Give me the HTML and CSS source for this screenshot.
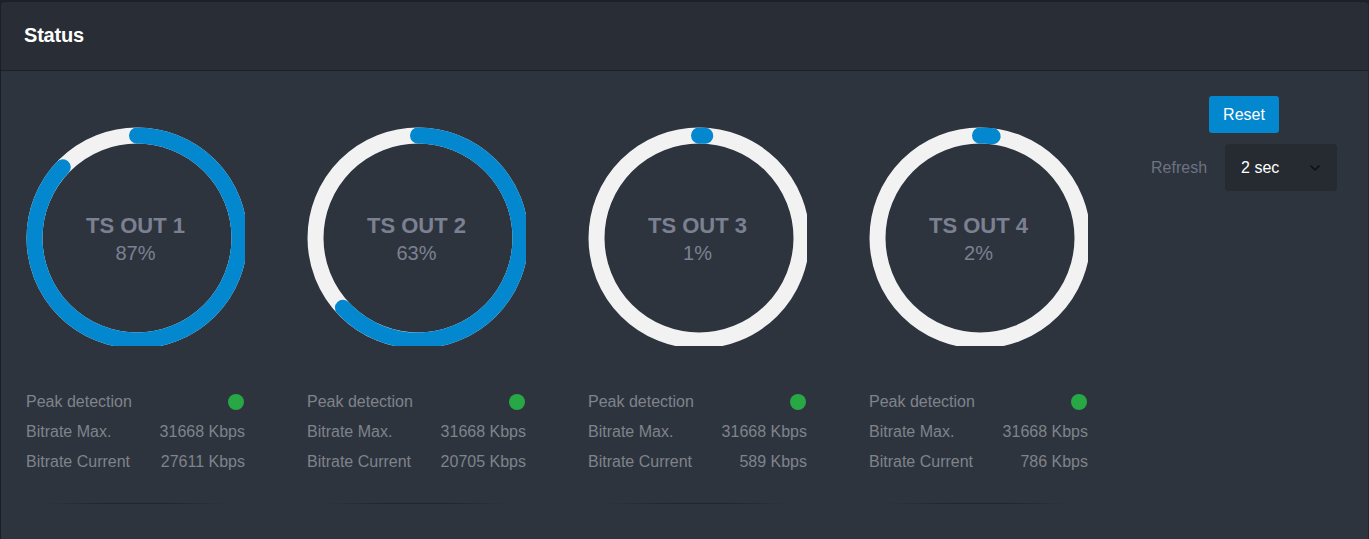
FILE: index.html
```html
<!DOCTYPE html>
<html>
<head>
<meta charset="utf-8">
<link rel="stylesheet" href="styles.css">
</head>
<body>
<div class="card">
  <div class="card-header"><h1 class="title">Status</h1></div>
  <div class="card-body">
    <div class="gauges">
      <div class="channel">
        <div class="gauge">
          <svg class="ring" width="219" height="219" viewBox="0 0 219 219">
            <circle class="track" cx="111" cy="111" r="102.5"/>
            <circle class="bar" cx="111" cy="111" r="102.5" style="stroke-dasharray: 560.3 1000"/>
          </svg>
          <div class="gauge-label"><div class="gauge-name">TS OUT 1</div><div class="gauge-pct">87%</div></div>
        </div>
        <div class="stats">
          <div class="row"><span>Peak detection</span><span class="dot"></span></div>
          <div class="row"><span>Bitrate Max.</span><span>31668 Kbps</span></div>
          <div class="row"><span>Bitrate Current</span><span>27611 Kbps</span></div>
        </div>
        <div class="shade"></div>
      </div>
      <div class="channel">
        <div class="gauge">
          <svg class="ring" width="219" height="219" viewBox="0 0 219 219">
            <circle class="track" cx="111" cy="111" r="102.5"/>
            <circle class="bar" cx="111" cy="111" r="102.5" style="stroke-dasharray: 405.7 1000"/>
          </svg>
          <div class="gauge-label"><div class="gauge-name">TS OUT 2</div><div class="gauge-pct">63%</div></div>
        </div>
        <div class="stats">
          <div class="row"><span>Peak detection</span><span class="dot"></span></div>
          <div class="row"><span>Bitrate Max.</span><span>31668 Kbps</span></div>
          <div class="row"><span>Bitrate Current</span><span>20705 Kbps</span></div>
        </div>
        <div class="shade"></div>
      </div>
      <div class="channel">
        <div class="gauge">
          <svg class="ring" width="219" height="219" viewBox="0 0 219 219">
            <circle class="track" cx="111" cy="111" r="102.5"/>
            <circle class="bar" cx="111" cy="111" r="102.5" style="stroke-dasharray: 6.44 1000"/>
          </svg>
          <div class="gauge-label"><div class="gauge-name">TS OUT 3</div><div class="gauge-pct">1%</div></div>
        </div>
        <div class="stats">
          <div class="row"><span>Peak detection</span><span class="dot"></span></div>
          <div class="row"><span>Bitrate Max.</span><span>31668 Kbps</span></div>
          <div class="row"><span>Bitrate Current</span><span>589 Kbps</span></div>
        </div>
        <div class="shade"></div>
      </div>
      <div class="channel">
        <div class="gauge">
          <svg class="ring" width="219" height="219" viewBox="0 0 219 219">
            <circle class="track" cx="111" cy="111" r="102.5"/>
            <circle class="bar" cx="111" cy="111" r="102.5" style="stroke-dasharray: 12.88 1000"/>
          </svg>
          <div class="gauge-label"><div class="gauge-name">TS OUT 4</div><div class="gauge-pct">2%</div></div>
        </div>
        <div class="stats">
          <div class="row"><span>Peak detection</span><span class="dot"></span></div>
          <div class="row"><span>Bitrate Max.</span><span>31668 Kbps</span></div>
          <div class="row"><span>Bitrate Current</span><span>786 Kbps</span></div>
        </div>
        <div class="shade"></div>
      </div>
    </div>
    <div class="controls">
      <button class="btn-reset">Reset</button>
      <div class="refresh">
        <span class="refresh-label">Refresh</span>
        <div class="select">
          <span>2 sec</span>
          <svg class="chev" width="10" height="6" viewBox="0 0 10 6"><path d="M1 1 L5 5 L9 1" fill="none" stroke="#0e1013" stroke-width="1.6" stroke-linecap="round" stroke-linejoin="round"/></svg>
        </div>
      </div>
    </div>
  </div>
</div>
</body>
</html>
```

FILE: styles.css
```css
html, body {
  margin: 0;
  padding: 0;
  background: #1e2128;
  font-family: "Liberation Sans", Arial, sans-serif;
}
body {
  padding-top: 1px;
  height: 539px;
  box-sizing: border-box;
  overflow: hidden;
}
.card {
  box-sizing: border-box;
  height: 100%;
  border: 1px solid #1c1f25;
  border-bottom: none;
  border-right: 1px solid #22262d;
  border-radius: 5px 5px 0 0;
  background: #2e343e;
  overflow: hidden;
}
.card-header {
  height: 68px;
  background: #292d35;
  border-bottom: 1px solid #1d2026;
  display: flex;
  align-items: center;
  padding-left: 23px;
}
.title {
  margin: 0;
  color: #ffffff;
  font-size: 20px;
  font-weight: bold;
  letter-spacing: -0.2px;
  padding-bottom: 2px;
}
.card-body {
  display: flex;
  padding: 25px 0 0 25px;
}
.gauges {
  display: flex;
  gap: 62px;
  padding-top: 31px;
}
.channel {
  width: 219px;
}
.gauge {
  position: relative;
  width: 219px;
  height: 219px;
}
.ring {
  display: block;
  overflow: hidden;
}
.track {
  fill: none;
  stroke: #f2f2f2;
  stroke-width: 16;
}
.bar {
  fill: none;
  stroke: #0388cf;
  stroke-width: 16;
  stroke-linecap: round;
  transform: rotate(-90deg);
  transform-origin: 111px 111px;
}
.gauge-label {
  position: absolute;
  left: 0;
  right: 0;
  top: 86px;
  text-align: center;
  color: #7b8192;
}
.gauge-name {
  font-size: 22px;
  font-weight: bold;
  line-height: 26px;
}
.gauge-pct {
  font-size: 20px;
  line-height: 28px;
}
.stats {
  margin-top: 41px;
  color: #7f838a;
  font-size: 16px;
}
.row {
  display: flex;
  justify-content: space-between;
  align-items: center;
  height: 30px;
}
.dot {
  width: 16px;
  height: 16px;
  border-radius: 50%;
  background: #28a745;
  margin-right: 1px;
}
.shade {
  margin: 26px auto 0;
  width: 190px;
  height: 1px;
  background: linear-gradient(to right, rgba(20,22,27,0) 0%, rgba(20,22,27,0.5) 35%, rgba(20,22,27,0.5) 65%, rgba(20,22,27,0) 100%);
}
.controls {
  margin-left: 63px;
  display: flex;
  flex-direction: column;
  align-items: center;
}
.btn-reset {
  width: 70px;
  height: 37px;
  background: #0388cf;
  color: #ffffff;
  border: none;
  border-radius: 3px;
  font-family: "Liberation Sans", Arial, sans-serif;
  font-size: 16px;
  padding: 0;
}
.refresh {
  display: flex;
  align-items: center;
  gap: 18px;
  margin-top: 11px;
}
.refresh-label {
  color: #6c7382;
  font-size: 16px;
}
.select {
  width: 112px;
  height: 47px;
  box-sizing: border-box;
  background: #262a31;
  border-radius: 4px;
  display: flex;
  align-items: center;
  justify-content: space-between;
  padding: 0 17px 0 16px;
  color: #ffffff;
  font-size: 16px;
}
.chev {
  display: block;
}
```
